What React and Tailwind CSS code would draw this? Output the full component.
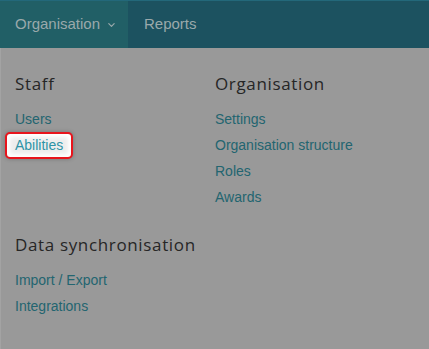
import React from "react";

const Chevron = () => (
  <svg className="ml-[7px] w-[10px] h-[10px]" viewBox="0 0 10 10" fill="none">
    <path d="M2 3.5l3 3 3-3" stroke="currentColor" strokeWidth="1.3" strokeLinecap="round" strokeLinejoin="round" />
  </svg>
);

const NavLink = ({ children, active }) => (
  <a
    href="#"
    className={
      active
        ? "block -ml-[10px] px-[8px] h-[27px] leading-[23px] rounded-[5px] border-2 border-[#e8141c] bg-[#ededed] shadow-[inset_0_0_4px_3px_#ffffff,0_0_4px_rgba(0,0,0,0.25)] text-[#2e93a6] w-max"
        : "block h-[26px] leading-[26px] text-[#236570] w-max"
    }
  >
    {children}
  </a>
);

const Heading = ({ children }) => (
  <h3 className="text-[17px] leading-[24px] text-[#262626] mb-[10px] font-['Open_Sans',sans-serif] tracking-[0.65px]">
    {children}
  </h3>
);

export default function App() {
  return (
    <div className="w-[429px] h-[349px] bg-[#999999] font-['Liberation_Sans',Arial,sans-serif] text-[14px] overflow-hidden">
      <nav className="h-12 bg-[#1c5260] border-t border-[#23687a] flex items-stretch text-[15px] text-[#9aa9ab]">
        <div className="bg-[#215f66] flex items-center pl-[15px] pr-[12px] w-[128px]">
          Organisation
          <Chevron />
        </div>
        <div className="flex items-center pl-[16px]">Reports</div>
      </nav>
      <div className="border-l border-[#a3a3a3] h-full pl-[14px] pt-6">
        <div className="grid grid-cols-[200px_1fr]">
          <div>
            <Heading>Staff</Heading>
            <NavLink>Users</NavLink>
            <NavLink active>Abilities</NavLink>
          </div>
          <div>
            <Heading>Organisation</Heading>
            <NavLink>Settings</NavLink>
            <NavLink>Organisation structure</NavLink>
            <NavLink>Roles</NavLink>
            <NavLink>Awards</NavLink>
          </div>
        </div>
        <div className="mt-[23px]">
          <Heading>Data synchronisation</Heading>
          <NavLink>Import / Export</NavLink>
          <NavLink>Integrations</NavLink>
        </div>
      </div>
    </div>
  );
}
